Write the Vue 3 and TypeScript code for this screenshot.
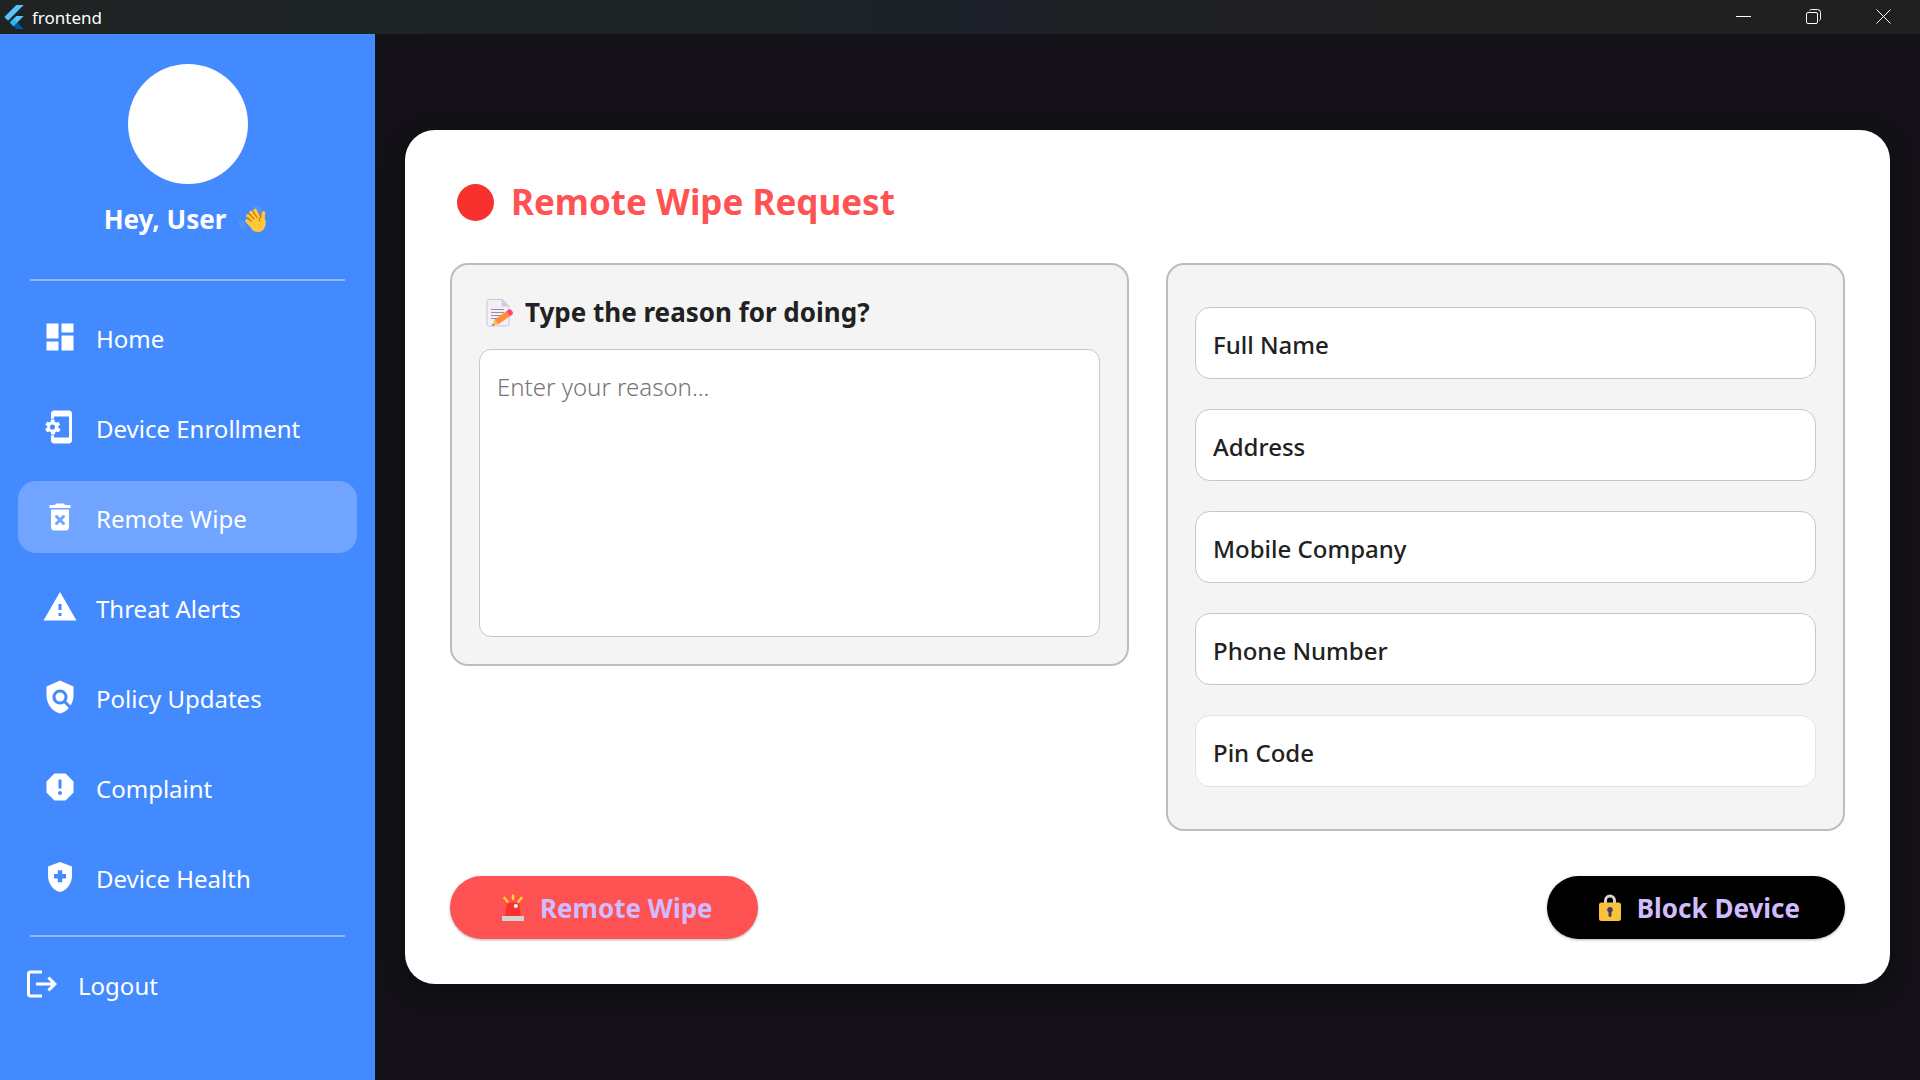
<script setup lang="ts">
import { ref } from 'vue'

interface NavItem {
  id: string
  label: string
}

interface Field {
  id: string
  label: string
  soft?: boolean
}

const navItems: NavItem[] = [
  { id: 'home', label: 'Home' },
  { id: 'enroll', label: 'Device Enrollment' },
  { id: 'wipe', label: 'Remote Wipe' },
  { id: 'threat', label: 'Threat Alerts' },
  { id: 'policy', label: 'Policy Updates' },
  { id: 'complaint', label: 'Complaint' },
  { id: 'health', label: 'Device Health' },
]

const fields: Field[] = [
  { id: 'full-name', label: 'Full Name' },
  { id: 'address', label: 'Address' },
  { id: 'mobile-company', label: 'Mobile Company' },
  { id: 'phone-number', label: 'Phone Number' },
  { id: 'pin-code', label: 'Pin Code', soft: true },
]

const active = ref('wipe')
const reason = ref('')
const values = ref<Record<string, string>>({})
</script>

<template>
  <div class="window">
    <header class="titlebar">
      <svg class="logo" viewBox="0 0 24 24" aria-hidden="true">
        <path fill="#54c5f8" d="M14.3 0 2.3 12 6 15.7 21.7 0z" />
        <path fill="#54c5f8" d="M14.3 11.1 7.9 17.5l3.7 3.7 10.1-10.1z" />
        <path fill="#01579b" d="m11.6 21.2 2.7 2.8h7.4l-6.4-6.5z" />
        <path fill="#29b6f6" d="m7.9 17.5 3.7-3.7 3.7 3.7-3.7 3.7z" />
      </svg>
      <span class="app-name">frontend</span>
      <div class="controls">
        <button type="button" aria-label="Minimize">
          <svg viewBox="0 0 16 16"><path d="M0 7.5h15" /></svg>
        </button>
        <button type="button" aria-label="Restore">
          <svg viewBox="0 0 16 16">
            <rect x="0.5" y="3.5" width="11" height="11" rx="1.5" />
            <path d="M3.5 1.5Q4 .5 5.500 .5H11.500Q14.500 .5 14.500 3.500V9.500Q14.500 11 13.500 11.500" />
          </svg>
        </button>
        <button type="button" aria-label="Close">
          <svg viewBox="0 0 16 16"><path d="m.5.500 14 14M14.500.500l-14 14" /></svg>
        </button>
      </div>
    </header>

    <div class="body">
      <aside class="sidebar">
        <div class="avatar"></div>
        <p class="greeting">
          <span>Hey, User</span>
          <svg class="wave" viewBox="0 0 30 30" aria-hidden="true">
            <g fill="none" stroke="#5e97f5" stroke-width="1.500" stroke-linecap="round">
              <path d="M16 3q5-2 7 4M18 5q2 0 3 2M2 17q-1 5 4 6M4.500 17q0 3 3 4" />
            </g>
            <g stroke="#ffc83d" stroke-linecap="round" stroke-width="3.600">
              <path d="m9 17 7 7M10 12l8 8M13 8.500l7 9M17 6.500l5 10" />
              <path d="m25.500 9-1 9" />
            </g>
            <path fill="#ffc83d" d="m9.500 18 8-6 6.500 2 3.300 1c1 5 .2 8.500-2.300 11-3 3-8 2.500-11-.5z" />
            <path fill="none" stroke="#d67d00" stroke-width="1.300" stroke-linecap="round" d="m9.500 13.500 4 4M11.500 9.800l4.500 5.400M15 7.500l4 6M22.700 9v4q-2 2-1 4" />
          </svg>
        </p>
        <hr />
        <nav>
          <a
            v-for="item in navItems"
            :key="item.id"
            href="#"
            class="nav-item"
            :class="{ active: active === item.id }"
            @click.prevent="active = item.id"
          >
            <svg class="icon" viewBox="0 0 24 24" aria-hidden="true">
              <path v-if="item.id === 'home'" d="M3 13h8V3H3v10zm0 8h8v-6H3v6zm10 0h8V11h-8v10zm0-18v6h8V3h-8z" />
              <g v-else-if="item.id === 'enroll'">
                <path d="M18 1H8c-1.100 0-2 .9-2 2v3.500h2V5h10v14H8v-1.500H6V21c0 1.100.9 2 2 2h10c1.100 0 2-.9 2-2V3c0-1.100-.9-2-2-2z" />
                <path transform="translate(-1 0)" d="M11.800 12.500v-1l1.100-.8c.1-.1.1-.2.1-.3l-1-1.700c-.1-.2-.2-.2-.3-.1l-1.300.4c-.3-.2-.6-.4-.9-.5l-.2-1.300c0-.1-.1-.2-.3-.2H7.300c-.2 0-.3.1-.3.2l-.2 1.300c-.3.1-.6.3-.9.5l-1.300-.5c-.1 0-.2 0-.3.1l-1 1.700c-.1.1 0 .2.1.3l1.100.8v1l-1.100.8c-.1.2-.1.3-.1.4l1 1.700c.1.2.2.2.3.1l1.400-.4c.3.2.6.4.9.5l.2 1.300c-.1.1.1.2.2.2h2c.1 0 .2-.1.3-.2l.2-1.300c.3-.1.6-.3.9-.5l1.300.5c.1 0 .2 0 .3-.1l1-1.700c.1-.1.1-.2 0-.3zM8 13.700a1.700 1.700 0 1 1 0-3.400 1.700 1.700 0 0 1 0 3.400z" />
              </g>
              <g v-else-if="item.id === 'wipe'">
                <path d="M6 19c0 1.100.9 2 2 2h8c1.100 0 2-.9 2-2V7H6v12zM15.500 4l-.7-.7c-.2-.2-.4-.3-.7-.3H9.900c-.3 0-.5.1-.7.3L8.500 4H5v2h14V4z" />
                <path class="cross" d="m9.700 11.700 4.600 4.600m0-4.600-4.600 4.600" />
              </g>
              <path v-else-if="item.id === 'threat'" d="M1 21h22L12 2 1 21zm12-3h-2v-2h2v2zm0-4h-2v-4h2v4z" />
              <g v-else-if="item.id === 'policy'">
                <path d="M21 5l-9-4-9 4v6c0 5.550 3.840 10.740 9 12 2.300-.56 4.330-1.900 5.880-3.710l-3.120-3.120c-1.940 1.290-4.580 1.070-6.290-.64-1.950-1.950-1.950-5.120 0-7.070 1.950-1.950 5.120-1.950 7.070 0 1.710 1.710 1.920 4.350.64 6.290l2.900 2.900C20.290 15.690 21 13.380 21 11V5z" />
                <circle cx="12" cy="12" r="3" />
              </g>
              <path v-else-if="item.id === 'complaint'" d="M15.730 3H8.270L3 8.270v7.460L8.270 21h7.460L21 15.730V8.270L15.730 3zM12 17.300c-.72 0-1.300-.58-1.300-1.300s.58-1.300 1.300-1.300 1.300.58 1.300 1.300-.58 1.300-1.300 1.300zm1-4.300h-2V7h2v6z" />
              <path v-else d="M10.500 13H8v-3h2.500V7.500h3V10H16v3h-2.500v2.500h-3V13zM12 2L4 5v6.090c0 5.050 3.410 9.760 8 10.910 4.590-1.150 8-5.860 8-10.910V5l-8-3z" fill-rule="evenodd" />
            </svg>
            <span>{{ item.label }}</span>
          </a>
        </nav>
        <hr />
        <a href="#" class="logout" @click.prevent>
          <svg class="icon" viewBox="0 0 24 24" aria-hidden="true">
            <path d="M17 7l-1.410 1.410L18.170 11H8v2h10.170l-2.580 2.580L17 17l5-5zM4 5h8V3H4c-1.100 0-2 .9-2 2v14c0 1.100.9 2 2 2h8v-2H4V5z" />
          </svg>
          <span>Logout</span>
        </a>
      </aside>

      <main>
        <form class="card" @submit.prevent>
          <h1><span class="dot"></span><span>Remote Wipe Request</span></h1>
          <div class="panels">
            <section class="panel">
              <label class="reason-label" for="reason">
                <svg class="memo" viewBox="0 0 30 30" aria-hidden="true">
                  <path fill="#f3eef8" stroke="#cdc4d6" stroke-width="1" d="M4 1.500h13.500l6.500 6.500v18.500q0 1.500-1.500 1.500h-19q-1.500 0-1.500-1.500v-23.500q0-1.500 1.500-1.500z" />
                  <path fill="#d3cbdc" d="M16.500 1.500V7q0 1.500 1.500 1.500h6z" />
                  <path stroke="#998ea4" d="M6 11.500h13M6 14.500h13M6 17.500h10M6 20.500h6" />
                  <path fill="#ff8f3d" d="m9.500 21.500 13-9 3.500 5-13 9z" />
                  <path fill="#f8c04e" d="m9.500 21.500 3.500 5-5.500 1z" />
                  <path fill="#433b6b" d="m8 25.700 1.200 1.500-2.200.5z" />
                  <path fill="#f8437c" d="m21.500 13.200 2-1.500q2-1 3.300 1l.8 1q1 1.800-.6 3l-2 1.400z" />
                </svg>
                <span>Type the reason for doing?</span>
              </label>
              <textarea id="reason" v-model="reason" placeholder="Enter your reason..."></textarea>
            </section>
            <section class="panel fields">
              <input
                v-for="field in fields"
                :id="field.id"
                :key="field.id"
                v-model="values[field.id]"
                type="text"
                :class="{ soft: field.soft }"
                :placeholder="field.label"
                :aria-label="field.label"
              />
            </section>
          </div>
          <div class="actions">
            <button type="button" class="pill wipe">
              <svg viewBox="0 0 30 30" aria-hidden="true">
                <path stroke="#ffcf2e" stroke-width="2.600" stroke-linecap="round" d="M15 2.500v3.500M6.500 5l3 3.500M23.500 5l-3 3.500" />
                <path fill="#f8312f" d="m7 24 1.300-10q.7-4.500 5-4.500h3.400q4.300 0 5 4.500L23 24z" />
                <circle cx="17.800" cy="13" r="2" fill="#fff" />
                <rect x="4" y="23" width="22" height="5" rx="1" fill="#d3d3d3" />
              </svg>
              <span>Remote Wipe</span>
            </button>
            <button type="button" class="pill block">
              <svg viewBox="0 0 30 30" aria-hidden="true">
                <path fill="none" stroke="#d3d3d3" stroke-width="3" d="M10.500 11V7.500a4.500 4.500 0 0 1 9 0V11" />
                <rect x="4" y="9.500" width="22" height="18.500" rx="2.500" fill="#f9c23c" />
                <path fill="#433b6b" d="M15 14a2.800 2.800 0 0 1 1.500 5.200V22.500a1.500 1.500 0 0 1-3 0V19.200A2.800 2.800 0 0 1 15 14z" />
              </svg>
              <span>Block Device</span>
            </button>
          </div>
        </form>
      </main>
    </div>
  </div>
</template>

<style>
body {
  margin: 0;
  background: #141218;
}
</style>

<style scoped>
.window {
  box-sizing: border-box;
  min-height: 100vh;
  display: flex;
  flex-direction: column;
  font-family: "Segoe UI", "Noto Sans", "Open Sans", sans-serif;
  font-size: 24px;
}

.window *,
.window *::before {
  box-sizing: border-box;
}

button,
input,
textarea {
  font-family: inherit;
}

a {
  color: inherit;
  text-decoration: none;
}

.titlebar {
  display: flex;
  align-items: center;
  height: 34px;
  padding: 0 1px 0 2px;
  background: linear-gradient(90deg, #1f2323 0%, #1d2326 44%, #1c2029 51%, #202125 56%, #202020 80%);
  color: #fff;
}

.logo {
  width: 24px;
  height: 24px;
}

.app-name {
  margin-left: 6px;
  padding-top: 1px;
  font-size: 17px;
  line-height: 24px;
}

.controls {
  display: flex;
  margin-left: auto;
}

.controls button {
  display: flex;
  align-items: center;
  justify-content: center;
  width: 70px;
  height: 34px;
  padding: 0;
  border: 0;
  background: none;
}

.controls svg {
  width: 16px;
  height: 16px;
  fill: none;
  stroke: #fff;
}

.body {
  flex: 1;
  display: flex;
}

.sidebar {
  flex: none;
  display: flex;
  flex-direction: column;
  width: 375px;
  padding-top: 30px;
  background: #448aff;
  color: #fff;
}

.avatar {
  align-self: center;
  width: 120px;
  height: 120px;
  border-radius: 50%;
  background: #fff;
}

.greeting {
  display: flex;
  align-items: center;
  justify-content: center;
  gap: 12px;
  margin: 17px 0 42px;
  padding-right: 3px;
  font-size: 26px;
  font-weight: 700;
  line-height: 36px;
}

.wave {
  width: 30px;
  height: 30px;
}

hr {
  width: 315px;
  height: 2px;
  margin: 0 auto;
  border: 0;
  background: #8fb9ff;
}

nav {
  display: flex;
  flex-direction: column;
  gap: 18px;
  padding: 20px 18px 22px;
}

.nav-item {
  display: flex;
  align-items: center;
  gap: 18px;
  height: 72px;
  padding: 0 24px;
  border-radius: 18px;
}

.nav-item.active {
  background: #70a4ff;
}

.icon {
  flex: none;
  width: 36px;
  height: 36px;
  fill: #fff;
}

.cross {
  fill: none;
  stroke: #70a4ff;
  stroke-width: 2;
  stroke-linecap: round;
}

.nav-item span,
.logout span {
  padding-top: 4px;
  line-height: 32px;
}

.logout {
  display: flex;
  align-items: center;
  gap: 18px;
  height: 72px;
  margin-top: 11px;
  padding: 0 24px;
}

main {
  flex: 1;
  display: flex;
  flex-direction: column;
  justify-content: center;
  padding: 30px;
}

.card {
  padding: 45px;
  border-radius: 30px;
  background: #fff;
  box-shadow: 0 6px 24px rgba(0, 0, 0, 0.4);
}

h1 {
  display: flex;
  align-items: center;
  gap: 17px;
  margin: 0 0 34px;
  padding-left: 7px;
  color: #ff5252;
  font-size: 35px;
  font-weight: 700;
  line-height: 54px;
}

.dot {
  width: 37px;
  height: 37px;
  border-radius: 50%;
  background: #f8312f;
}

.panels {
  display: flex;
  align-items: flex-start;
  gap: 37px;
}

.panel {
  flex: 1;
  display: flex;
  flex-direction: column;
  min-width: 0;
  padding: 27px;
  border: 2px solid #bdbdbd;
  border-radius: 18px;
  background: #f4f4f4;
}

.fields {
  gap: 30px;
  padding: 42px 27px;
}

.reason-label {
  display: flex;
  align-items: center;
  gap: 10px;
  margin-bottom: 17px;
  padding: 1px 0 0 6px;
  color: #212121;
  font-size: 26px;
  font-weight: 700;
  line-height: 39px;
}

.memo {
  width: 30px;
  height: 30px;
}

textarea,
input {
  width: 100%;
  margin: 0;
  border: 1px solid #cac4d0;
  background: #fff;
  color: #212121;
  outline: none;
}

textarea {
  height: 288px;
  padding: 19px 17px;
  border-radius: 12px;
  font-size: 24px;
  line-height: 36px;
  resize: none;
}

textarea::placeholder {
  color: #757575;
  font-weight: 300;
  opacity: 1;
}

input {
  height: 72px;
  padding: 2px 17px 0;
  border-radius: 15px;
  font-size: 24px;
  font-weight: 500;
}

input.soft {
  border-color: #e5e0ea;
}

input::placeholder {
  color: #212121;
  opacity: 1;
}

.actions {
  display: flex;
  justify-content: space-between;
  margin-top: 45px;
}

.pill {
  display: flex;
  align-items: center;
  gap: 12px;
  height: 63px;
  padding: 0 45px 0 48px;
  border: 0;
  border-radius: 32px;
  color: #d0bcff;
  font-size: 26px;
  font-weight: 700;
  line-height: 36px;
  box-shadow: 0 1px 3px rgba(0, 0, 0, 0.3);
}

.pill svg {
  width: 30px;
  height: 30px;
}

.pill.wipe {
  background: #ff5252;
}

.pill.block {
  background: #000;
}
</style>
